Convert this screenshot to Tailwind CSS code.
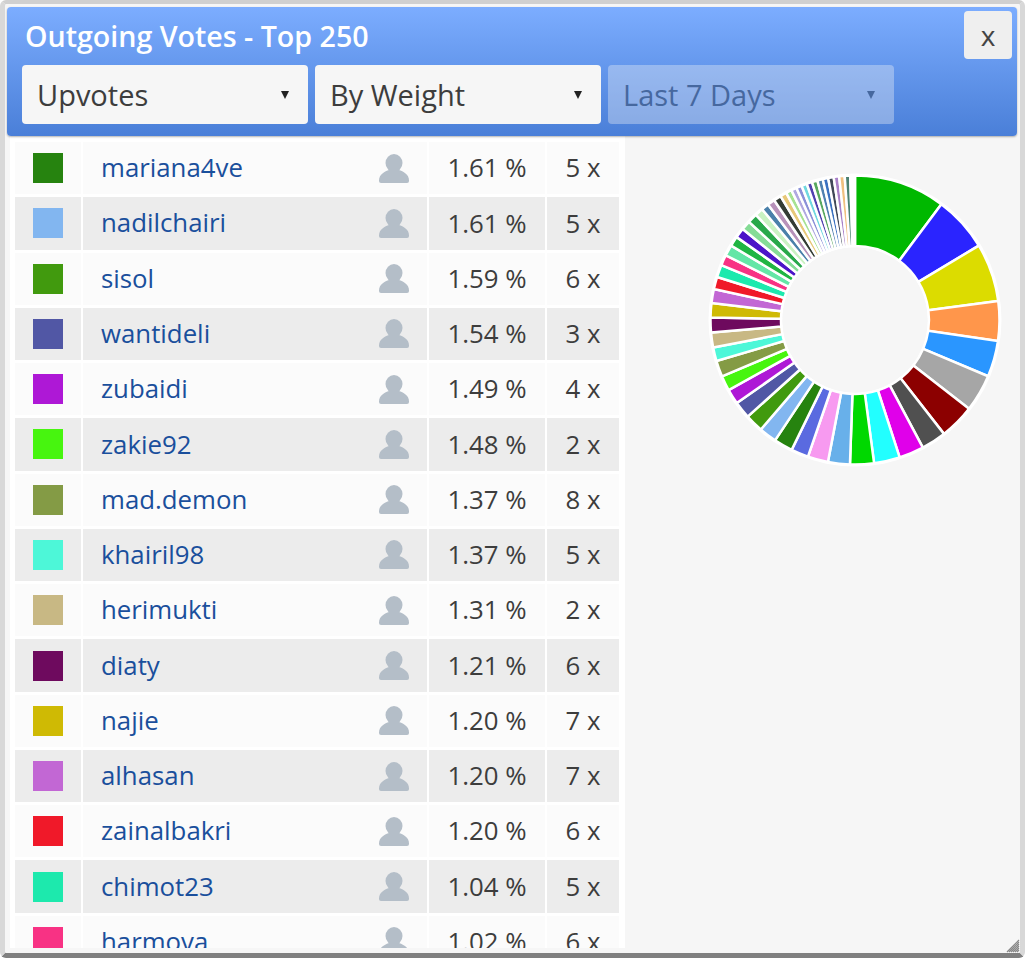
<!DOCTYPE html>
<html lang="en">

<head>
    <meta charset="UTF-8" />
    <title>Outgoing Votes</title>
    <script src="https://cdn.jsdelivr.net/npm/@tailwindcss/browser@4"></script>
</head>

<body class="h-[958px] w-[1025px] overflow-hidden bg-white font-['Open_Sans',sans-serif] text-[#3d3d3d]">
    <div class="relative flex h-[958px] flex-col overflow-hidden rounded-[6px] border-x-[5px] border-t-[4px] border-b-[5px] border-x-[#d8d8d8] border-t-[#d0d0d0] border-b-[#808080] bg-[#f6f6f6]">

        <!-- Header -->
        <div class="relative ml-[2px] mr-[3px] mt-[3px] h-[129px] shrink-0 rounded-[4px] bg-gradient-to-b from-[#7cadff] to-[#4a7fd8] px-[15px] shadow-[0_1px_2px_rgba(0,0,0,0.3)]">
            <h1 class="pl-[3px] pt-[9px] text-[28.6px] leading-[40px] font-semibold text-white">Outgoing Votes - Top 250</h1>
            <div class="mt-[9px] flex gap-[7px]">
                <div class="flex h-[59px] w-[286px] items-center justify-between rounded-[4px] bg-[#f6f6f6] pl-[15px] pr-[19px] text-[29px]">
                    <span>Upvotes</span><span class="size-0 border-x-[4px] border-t-[8px] border-x-transparent border-t-[#222]"></span>
                </div>
                <div class="flex h-[59px] w-[286px] items-center justify-between rounded-[4px] bg-[#f6f6f6] pl-[15px] pr-[19px] text-[29px]">
                    <span>By Weight</span><span class="size-0 border-x-[4px] border-t-[8px] border-x-transparent border-t-[#222]"></span>
                </div>
                <div class="flex h-[59px] w-[286px] items-center justify-between rounded-[4px] bg-[#f6f6f6]/35 pl-[15px] pr-[19px] text-[29px] text-[#46689f]">
                    <span>Last 7 Days</span><span class="size-0 border-x-[4px] border-t-[8px] border-x-transparent border-t-[#46689f]"></span>
                </div>
            </div>
            <button class="absolute right-[5px] top-[4px] size-[48px] rounded-[4px] bg-[#efefef] text-[28px] leading-[44px] text-[#444]">x</button>
        </div>

        <!-- Body -->
        <div class="flex min-h-0 flex-1">
            <div class="ml-[5px] h-[812px] w-[615px] shrink-0 overflow-hidden bg-white pl-[3px] pt-[3px]">
                <table id="votes" class="border-separate border-spacing-x-[2px] border-spacing-y-[3px] text-[25.8px] leading-none">
                    <tbody id="rows"></tbody>
                </table>
            </div>
            <div class="relative flex-1">
                <svg id="pie" class="absolute left-[80px] top-[34px]" width="300" height="300" viewBox="-150 -150 300 300"></svg>
            </div>
        </div>

        <!-- Resize grip -->
        <svg class="absolute bottom-0 right-0" width="14" height="14" viewBox="0 0 14 14" stroke="#888" stroke-width="1.2">
            <path d="M1 13 13 1M3 13 13 3M5 13 13 5M7 13 13 7M9 13 13 9M11 13 13 11" />
        </svg>
    </div>

    <script>
        const voters = [
            ['mariana4ve', '#26830f', '1.61', 5],
            ['nadilchairi', '#82b6f0', '1.61', 5],
            ['sisol', '#419a0e', '1.59', 6],
            ['wantideli', '#5157a5', '1.54', 3],
            ['zubaidi', '#ae18d6', '1.49', 4],
            ['zakie92', '#47f50f', '1.48', 2],
            ['mad.demon', '#849b45', '1.37', 8],
            ['khairil98', '#4df7d8', '1.37', 5],
            ['herimukti', '#c8b884', '1.31', 2],
            ['diaty', '#6e0a5e', '1.21', 6],
            ['najie', '#cfba04', '1.20', 7],
            ['alhasan', '#c267d4', '1.20', 7],
            ['zainalbakri', '#f01929', '1.20', 6],
            ['chimot23', '#1de9ad', '1.04', 5],
            ['harmova', '#f83284', '1.02', 6],
        ];

        const rows = document.getElementById('rows');
        voters.forEach((v, i) => {
            const bg = i % 2 ? 'bg-[#ececec]' : 'bg-[#fbfbfb]';
            const tr = document.createElement('tr');
            tr.className = 'h-[52.27px]';
            tr.innerHTML = `
                <td class="${bg} w-[66px] p-0"><span class="mx-auto block size-[30px]" style="background:${v[1]}"></span></td>
                <td class="${bg} w-[344px] p-0">
                    <div class="flex items-center justify-between pl-[18px] pr-[18px]">
                        <a class="text-[#1a4f9c]">${v[0]}</a>
                        <svg width="30" height="29" viewBox="0 0 30 29" fill="#b4bec8"><ellipse cx="15" cy="9" rx="8.500" ry="9"/><path d="M0 26.500C0 20 6 17.500 10 16h10c4 1.500 10 4 10 10.500V27a2 2 0 0 1-2 2H2a2 2 0 0 1-2-2z"/></svg>
                    </div>
                </td>
                <td class="${bg} w-[116px] p-0 text-center">${v[2]} %</td>
                <td class="${bg} w-[72px] p-0 text-center">${v[3]} x</td>`;
            rows.appendChild(tr);
        });

        // end angle (degrees from 12 o'clock) and colour of every slice
        const slices = [
            [36.7, '#00b800'], [59, '#2a24ff'], [82.4, '#dcdc00'], [98.4, '#ff964b'], [112.9, '#2a96ff'],
            [127.9, '#a6a6a6'], [142, '#8c0000'], [152, '#505050'], [162, '#e000ea'], [172.4, '#22ffff'],
            [182, '#00d800'], [190.8, '#68b0ea'], [199, '#f79af0'], [206, '#5a6ae0'], [213.6, '#26830f'],
            [220.7, '#82b6f0'], [228, '#419a0e'], [234.9, '#5157a5'], [241, '#ae18d6'], [247, '#47f50f'],
            [253.5, '#849b45'], [259, '#4df7d8'], [265, '#c8b884'], [271, '#6e0a5e'], [276.8, '#cfba04'],
            [282.4, '#c267d4'], [287.3, '#f01929'], [292.3, '#1de9ad'], [296.6, '#f83284'], [301, '#63e6a6'],
            [305, '#1fb543'], [309, '#4b14c8'], [312.8, '#85dc96'], [316.7, '#28a84a'], [320, '#c9f2c2'],
            [323, '#4a80aa'], [326, '#b892ba'], [329, '#343c34'], [331.6, '#e8c878'], [333.9, '#a6e292'],
            [336.1, '#b0a8e0'], [338.3, '#8a90d8'], [340.5, '#70d8e0'], [342.7, '#5040b0'], [344.9, '#58a860'],
            [347.1, '#5080b0'], [349.3, '#3a70c0'], [351.5, '#404858'], [353.7, '#a880c8'], [355.9, '#f0c080'],
            [358.1, '#4a8070'], [360, '#ffffff'],
        ];

        const R = 144.5, r = 74;
        const pt = (rad, deg) => {
            const a = deg * Math.PI / 180;
            return `${(rad * Math.sin(a)).toFixed(2)} ${(-rad * Math.cos(a)).toFixed(2)}`;
        };
        const pie = document.getElementById('pie');
        let start = 0, out = `<circle r="${R + 2}" fill="#fff"/><circle r="${r - 1}" fill="#f6f6f6"/>`;
        slices.forEach(([end, col]) => {
            const large = end - start > 180 ? 1 : 0;
            out += `<path fill="${col}" stroke="#fff" stroke-width="2.500" d="M${pt(R, start)}A${R} ${R} 0 ${large} 1 ${pt(R, end)}L${pt(r, end)}A${r} ${r} 0 ${large} 0 ${pt(r, start)}Z"/>`;
            start = end;
        });
        pie.innerHTML = out;
    </script>
</body>

</html>
